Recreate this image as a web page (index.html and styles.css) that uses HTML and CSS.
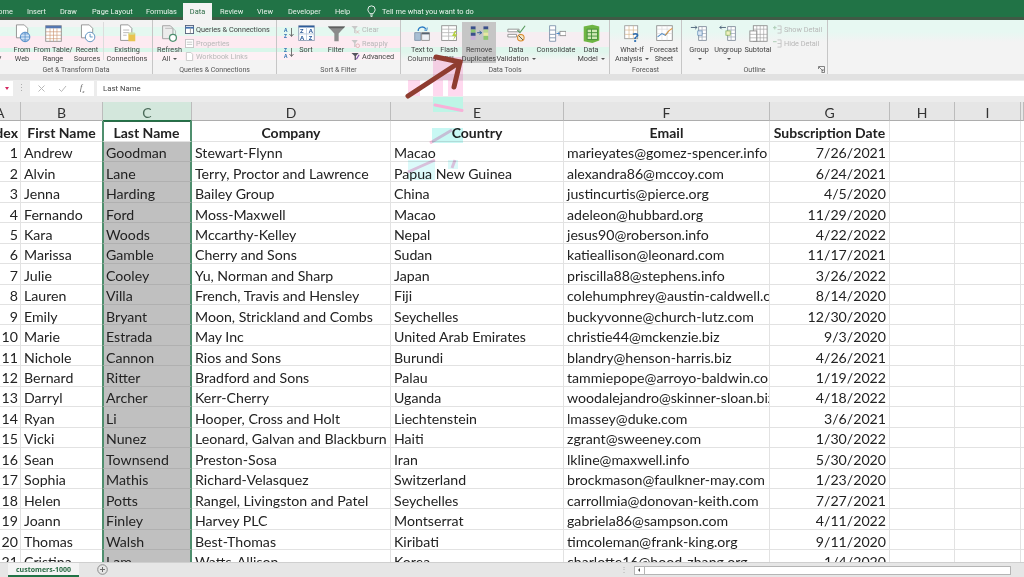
FILE: index.html
```html
<!DOCTYPE html>
<html lang="en">
<head>
<meta charset="utf-8">
<title>customers-1000 - Excel</title>
<link rel="stylesheet" href="styles.css">
</head>
<body>
<div class="app">
  <nav class="tabs">
    <span class="tab t-home">Home</span>
    <span class="tab t-insert">Insert</span>
    <span class="tab t-draw">Draw</span>
    <span class="tab t-layout">Page Layout</span>
    <span class="tab t-formulas">Formulas</span>
    <span class="tab tab-active">Data</span>
    <span class="tab t-review">Review</span>
    <span class="tab t-view">View</span>
    <span class="tab t-dev">Developer</span>
    <span class="tab t-help">Help</span>
    <svg class="bulb" viewBox="0 0 10 13"><path d="M3.2 9.5C2.5 7.8 1 7.2 1 4.8a4 4 0 0 1 8 0C9 7.2 7.5 7.8 6.8 9.5zM3.5 11h3M4 12.5h2" fill="none" stroke="#fff" stroke-width="1"/></svg>
    <span class="tell">Tell me what you want to do</span>
  </nav>

  <section class="ribbon">
    <div class="group g-get band-a">
      <div class="cmds">
        <div class="cmd w20 first"><svg class="ico" viewBox="0 0 22 22"><path d="M5 2h9l4 4v14H5z" fill="#fff" stroke="#8a8a8a"/><path d="M8 10h7M8 13h7M8 16h7" stroke="#2b7cc4"/></svg><span>From</span><span>Text/CSV</span></div>
        <div class="cmd w20"><svg class="ico" viewBox="0 0 22 22"><path d="M4 1h9l4 4v11H4z" fill="#fff" stroke="#8a8a8a"/><circle cx="14" cy="15" r="5.5" fill="#cfe2f5" stroke="#3f7fc1"/><path d="M8.5 15h11M14 9.5v11M10 11.5h8M10 18.500h8" stroke="#3f7fc1" stroke-width=".7"/></svg><span>From</span><span>Web</span></div>
        <div class="cmd w42"><svg class="ico" viewBox="0 0 22 22"><rect x="2" y="2" width="18" height="18" fill="#fff" stroke="#8a8a8a"/><path d="M2 2h18v3H2z" fill="#5577b0"/><path d="M2 9h18M2 13h18M2 17h18M7 5v15M11 5v15M15 5v15" stroke="#c98f6a" stroke-width=".7"/></svg><span>From Table/</span><span>Range</span></div>
        <div class="cmd w26"><svg class="ico" viewBox="0 0 22 22"><path d="M4 1h9l4 4v11H4z" fill="#fff" stroke="#8a8a8a"/><circle cx="14" cy="15" r="5.500" fill="#fff" stroke="#4d86b8"/><path d="M14 11.500V15h3" fill="none" stroke="#4d86b8"/></svg><span>Recent</span><span>Sources</span></div>
        <i class="minisep"></i>
        <div class="cmd w44"><svg class="ico" viewBox="0 0 22 22"><path d="M3 1h9l4 4v14H3z" fill="#fff" stroke="#8a8a8a"/><path d="M6 7h7M6 10h7M6 13h4" stroke="#b0b0b0"/><path d="M12 11h8v9h-8z" fill="#e8c34f"/><ellipse cx="16" cy="11" rx="4" ry="1.500" fill="#cfe0a0"/></svg><span>Existing</span><span>Connections</span></div>
      </div>
      <div class="glabel">Get &amp; Transform Data</div>
    </div>

    <div class="group g-queries band-a">
      <div class="cmds">
        <div class="cmd w33"><svg class="ico" viewBox="0 0 22 22"><path d="M3 2h9l3 3v12H3z" fill="#ececec" stroke="#9a9a9a"/><path d="M6 5h9l3 3v6" fill="none" stroke="#b5b5b5"/><circle cx="15" cy="16" r="4" fill="#fff" stroke="#4f8f70" stroke-width="1.500"/></svg><span>Refresh</span><span>All <b class="caret"></b></span></div>
        <div class="smalls">
          <div class="small"><svg class="sico" viewBox="0 0 10 10"><rect x=".5" y=".5" width="9" height="9" fill="#fff" stroke="#55627a"/><path d="M.5 3h9" stroke="#3f6fb0" stroke-width="2"/><path d="M6 3v6" stroke="#9a9a9a"/></svg>Queries &amp; Connections</div>
          <div class="small off"><svg class="sico" viewBox="0 0 10 10"><rect x=".5" y=".5" width="9" height="9" fill="#fff" stroke="#c4c4c4"/><path d="M2 3.500h6M2 6h6" stroke="#c4c4c4"/></svg>Properties</div>
          <div class="small off"><svg class="sico" viewBox="0 0 10 10"><path d="M1.500.5h5l2 2v7h-7z" fill="#fff" stroke="#c4c4c4"/></svg>Workbook Links</div>
        </div>
      </div>
      <div class="glabel">Queries &amp; Connections</div>
    </div>

    <div class="group g-sort band-a">
      <div class="cmds">
        <div class="sortpair">
          <svg class="sort-s" viewBox="0 0 10 11"><text x="0" y="5" class="svgt">A</text><text x="0" y="11" class="svgt">Z</text><path d="M7.500 1v8M5.500 7l2 2.500 2-2.500" fill="none" stroke="#555" stroke-width=".8"/></svg>
          <svg class="sort-s" viewBox="0 0 10 11"><text x="0" y="5" class="svgt">Z</text><text x="0" y="11" class="svgt">A</text><path d="M7.500 1v8M5.500 7l2 2.500 2-2.500" fill="none" stroke="#555" stroke-width=".8"/></svg>
        </div>
        <div class="cmd w22"><svg class="ico" viewBox="0 0 22 22"><rect x="2" y="2" width="18" height="17" fill="#fff" stroke="#8a9ab0"/><path d="M2 2h18v2H2z" fill="#2e5c9a"/><path d="M11 4v15M2 11.500h18" stroke="#b8c8dc"/><text x="3.500" y="10.500" class="svgt big">Z</text><text x="13.500" y="10.500" class="svgt big">A</text><text x="3.500" y="18" class="svgt big">A</text><text x="13.500" y="18" class="svgt big">Z</text></svg><span>Sort</span></div>
        <div class="cmd w30"><svg class="ico" viewBox="0 0 22 22"><path d="M1 3h20l-7.500 8v9h-5v-9z" fill="#8b8b8b"/><path d="M1 3h20l-2 2H3z" fill="#5f5f5f"/></svg><span>Filter</span></div>
        <div class="smalls">
          <div class="small off"><svg class="sico" viewBox="0 0 10 10"><path d="M.5 1h7L5 4.500V9H3.500V4.500z" fill="#c8c8c8"/><path d="M5.500 6l3.500 3.500M9 6 5.500 9.500" stroke="#d9a9a9" stroke-width=".8"/></svg>Clear</div>
          <div class="small off"><svg class="sico" viewBox="0 0 10 10"><path d="M.5 1h7L5 4.500V9H3.500V4.500z" fill="#c8c8c8"/><circle cx="7.500" cy="7.500" r="2" fill="none" stroke="#d9a9a9" stroke-width=".8"/></svg>Reapply</div>
          <div class="small"><svg class="sico" viewBox="0 0 10 10"><path d="M.5 1h8L5.500 4.500V9H4V4.500z" fill="#55555f"/><path d="M6 8l3-5" stroke="#7a4fa8" stroke-width="1.300"/></svg>Advanced</div>
        </div>
      </div>
      <div class="glabel">Sort &amp; Filter</div>
    </div>

    <div class="group g-tools">
      <div class="cmds">
        <div class="cmd w42"><svg class="ico" viewBox="0 0 22 22"><path d="M2 10h7v9H2z" fill="#a8bed4" stroke="#7f93a8"/><path d="M10 10h9v9h-9z" fill="#eef2f6" stroke="#8a8a8a"/><path d="M10 10h9v2h-9z" fill="#54636f"/><path d="M6 8c0-5 7-6 9-2" fill="none" stroke="#2b7cc4" stroke-width="1.500"/><path d="M13 7l3 .5 .5-3.500" fill="none" stroke="#2b7cc4"/></svg><span>Text to</span><span>Columns</span></div>
        <div class="cmd w22n"><svg class="ico" viewBox="0 0 22 22"><rect x="2" y="2" width="17" height="17" fill="#fff" stroke="#8a8a8a"/><path d="M2 6h17M2 10h17M2 14h17M10 2v17" stroke="#b9b9b9"/><path d="M17 8l-3 6h3l-2 5 5-7h-3l2-4z" fill="#b5cf3f"/></svg><span>Flash</span><span>Fill</span></div>
        <div class="cmd w36 active"><svg class="ico" viewBox="0 0 24 22"><path d="M1 2h6v4H1z" fill="#3a4f8a"/><path d="M1 6h6v4H1z" fill="#8fc76f"/><path d="M1 10h6v4H1z" fill="#3a4f8a"/><path d="M1 14h6v5H1z" fill="#c9b0d8"/><path d="M17 2h6v4h-6z" fill="#3a4f8a"/><path d="M17 6h6v4h-6z" fill="#b8d98f"/><path d="M17 10h6v4h-6z" fill="#e8e8a0"/><path d="M17 14h6v5h-6z" fill="#8fc76f"/><path d="M9 10h5M12 8l3 2-3 2" fill="none" stroke="#2b5c9a" stroke-width="1.200"/></svg><span>Remove</span><span>Duplicates</span></div>
        <div class="cmd w40"><svg class="ico" viewBox="0 0 22 22"><path d="M1 6h13v3H1zM1 12h10v3H1z" fill="#fff" stroke="#8a8a8a"/><path d="M12 7l3 3 6-8" fill="none" stroke="#5a9a5f" stroke-width="1.300"/><circle cx="16" cy="16" r="3.800" fill="#f3e7c8" stroke="#d8892b" stroke-width="1.200"/><path d="M13.500 13.500l5 5" stroke="#444"/></svg><span>Data</span><span>Validation <b class="caret"></b></span></div>
        <div class="cmd w40"><svg class="ico" viewBox="0 0 22 22"><path d="M3 2h7v18H3zM3 7h7M3 12h7M3 16h7" fill="#fff" stroke="#7b8fa8"/><path d="M11 11h4M13 9l2 2-2 2" fill="none" stroke="#2b7cc4"/><rect x="15" y="8.500" width="7" height="5" fill="#fff" stroke="#8a8a8a"/></svg><span>Consolidate</span></div>
        <div class="cmd w30"><svg class="ico" viewBox="0 0 22 22"><path d="M2 3l10-2 8 2v16l-8 3-10-2z" fill="#6fb544"/><path d="M6 6h12v12H6z" fill="#cfe8b4" stroke="#3d8a32"/><path d="M6 10h12M6 14h12M11 6v12" stroke="#3d8a32"/></svg><span>Data</span><span>Model <b class="caret"></b></span></div>
      </div>
      <div class="glabel">Data Tools</div>
    </div>

    <div class="group g-fore">
      <div class="cmds">
        <div class="cmd w38"><svg class="ico" viewBox="0 0 22 22"><rect x="2" y="2" width="15" height="15" fill="#fff" stroke="#9a9a9a"/><path d="M2 7h15M2 12h15M7 2v15M12 2v15" stroke="#d9b98f" stroke-width=".8"/><text x="11" y="21" class="svgq">?</text></svg><span>What-If</span><span>Analysis <b class="caret"></b></span></div>
        <div class="cmd w32"><svg class="ico" viewBox="0 0 22 22"><rect x="2" y="2" width="18" height="17" fill="#fff" stroke="#8a8a8a"/><path d="M2 6h18M2 11h18M8 2v17M14 2v17" stroke="#d5d5d5" stroke-width=".7"/><path d="M3 15l5-4 4 2 4-5" fill="none" stroke="#4f8ac4" stroke-width="1.200"/><path d="M12 13l4-5 4-3" fill="none" stroke="#e59a3a" stroke-width="1.200"/></svg><span>Forecast</span><span>Sheet</span></div>
      </div>
      <div class="glabel">Forecast</div>
    </div>

    <div class="group g-out">
      <div class="cmds">
        <div class="cmd w28"><svg class="ico" viewBox="0 0 22 22"><path d="M10 3h9v16h-9z" fill="#fff" stroke="#7f8b99"/><path d="M10 7h9M10 11h9M10 15h9M14 3v16" stroke="#9aa7b5" stroke-width=".8"/><rect x="9" y="8" width="5" height="5" fill="#dbe7f3" stroke="#4f7fb0" stroke-width=".7"/><path d="M1 4h7M6 2l2 2-2 2" fill="none" stroke="#42586f"/></svg><span>Group</span><span><b class="caret"></b></span></div>
        <div class="cmd w30"><svg class="ico" viewBox="0 0 22 22"><path d="M10 3h9v16h-9z" fill="#fff" stroke="#7f8b99"/><path d="M10 7h9M10 11h9M10 15h9M14 3v16" stroke="#9aa7b5" stroke-width=".8"/><rect x="8" y="8" width="5" height="5" fill="#f0f0c0" stroke="#7aaa4f" stroke-width=".8"/><path d="M8 4H1M3 2 1 4l2 2" fill="none" stroke="#42586f"/></svg><span>Ungroup</span><span><b class="caret"></b></span></div>
        <div class="cmd w30"><svg class="ico" viewBox="0 0 22 22"><rect x="5" y="2" width="16" height="18" fill="#fff" stroke="#8a8a8a"/><rect x="1" y="8" width="8" height="12" fill="#fff" stroke="#8a8a8a"/><path d="M5 6h16M1 12h20M1 16h20M9 2v18M13 2v18M17 2v18" stroke="#9a9a9a" stroke-width=".7"/></svg><span>Subtotal</span></div>
        <div class="smalls">
          <div class="small off"><svg class="sico" viewBox="0 0 10 10"><path d="M5 1h4M9 1v8M5 9h4M5 5h4" fill="none" stroke="#c4c4c4"/><path d="M0 3h4M2 1v4" stroke="#a8c8b0"/></svg>Show Detail</div>
          <div class="small off"><svg class="sico" viewBox="0 0 10 10"><path d="M5 1h4M9 1v8M5 9h4M5 5h4" fill="none" stroke="#c4c4c4"/><path d="M0 3h4" stroke="#a8c8b0"/></svg>Hide Detail</div>
        </div>
      </div>
      <div class="glabel">Outline</div>
      <svg class="launcher" viewBox="0 0 7 7"><path d="M.5 3V.5h6v6H3.500" fill="none" stroke="#666" stroke-width=".8"/><path d="M1 1l4 4M3 5h2V3" fill="none" stroke="#666" stroke-width=".8"/></svg>
    </div>
  </section>

  <div class="formula">
    <div class="namebox"><b class="pinkcaret"></b></div>
    <div class="dots">⋮</div>
    <div class="fbtns">
      <svg class="fb" viewBox="0 0 9 9"><path d="M1.500 1.500l6 6M7.500 1.500l-6 6" stroke="#b8b8b8"/></svg>
      <svg class="fb" viewBox="0 0 9 9"><path d="M1 5l2.500 2.500L8 2" fill="none" stroke="#b8b8b8"/></svg>
      <span class="fx">f<sub>x</sub></span>
    </div>
    <div class="finput">Last Name</div>
  </div>

  <div class="sheet">
    <div class="row colhead"><div class="ca"><span class="a-letter">A</span></div><div>B</div><div class="hsel">C</div><div>D</div><div>E</div><div>F</div><div>G</div><div>H</div><div>I</div><div></div></div>
    <div class="row titles"><div class="num">Index</div><div>First Name</div><div class="sel activecell">Last Name</div><div>Company</div><div>Country</div><div>Email</div><div>Subscription Date</div><div></div><div></div><div></div></div>
    <div class="row"><div class="num">1</div><div>Andrew</div><div class="sel">Goodman</div><div>Stewart-Flynn</div><div>Macao</div><div>marieyates@gomez-spencer.info</div><div class="num">7/26/2021</div><div></div><div></div><div></div></div>
    <div class="row"><div class="num">2</div><div>Alvin</div><div class="sel">Lane</div><div>Terry, Proctor and Lawrence</div><div>Papua New Guinea</div><div>alexandra86@mccoy.com</div><div class="num">6/24/2021</div><div></div><div></div><div></div></div>
    <div class="row"><div class="num">3</div><div>Jenna</div><div class="sel">Harding</div><div>Bailey Group</div><div>China</div><div>justincurtis@pierce.org</div><div class="num">4/5/2020</div><div></div><div></div><div></div></div>
    <div class="row"><div class="num">4</div><div>Fernando</div><div class="sel">Ford</div><div>Moss-Maxwell</div><div>Macao</div><div>adeleon@hubbard.org</div><div class="num">11/29/2020</div><div></div><div></div><div></div></div>
    <div class="row"><div class="num">5</div><div>Kara</div><div class="sel">Woods</div><div>Mccarthy-Kelley</div><div>Nepal</div><div>jesus90@roberson.info</div><div class="num">4/22/2022</div><div></div><div></div><div></div></div>
    <div class="row"><div class="num">6</div><div>Marissa</div><div class="sel">Gamble</div><div>Cherry and Sons</div><div>Sudan</div><div>katieallison@leonard.com</div><div class="num">11/17/2021</div><div></div><div></div><div></div></div>
    <div class="row"><div class="num">7</div><div>Julie</div><div class="sel">Cooley</div><div>Yu, Norman and Sharp</div><div>Japan</div><div>priscilla88@stephens.info</div><div class="num">3/26/2022</div><div></div><div></div><div></div></div>
    <div class="row"><div class="num">8</div><div>Lauren</div><div class="sel">Villa</div><div>French, Travis and Hensley</div><div>Fiji</div><div>colehumphrey@austin-caldwell.com</div><div class="num">8/14/2020</div><div></div><div></div><div></div></div>
    <div class="row"><div class="num">9</div><div>Emily</div><div class="sel">Bryant</div><div>Moon, Strickland and Combs</div><div>Seychelles</div><div>buckyvonne@church-lutz.com</div><div class="num">12/30/2020</div><div></div><div></div><div></div></div>
    <div class="row"><div class="num">10</div><div>Marie</div><div class="sel">Estrada</div><div>May Inc</div><div>United Arab Emirates</div><div>christie44@mckenzie.biz</div><div class="num">9/3/2020</div><div></div><div></div><div></div></div>
    <div class="row"><div class="num">11</div><div>Nichole</div><div class="sel">Cannon</div><div>Rios and Sons</div><div>Burundi</div><div>blandry@henson-harris.biz</div><div class="num">4/26/2021</div><div></div><div></div><div></div></div>
    <div class="row"><div class="num">12</div><div>Bernard</div><div class="sel">Ritter</div><div>Bradford and Sons</div><div>Palau</div><div>tammiepope@arroyo-baldwin.com</div><div class="num">1/19/2022</div><div></div><div></div><div></div></div>
    <div class="row"><div class="num">13</div><div>Darryl</div><div class="sel">Archer</div><div>Kerr-Cherry</div><div>Uganda</div><div>woodalejandro@skinner-sloan.biz</div><div class="num">4/18/2022</div><div></div><div></div><div></div></div>
    <div class="row"><div class="num">14</div><div>Ryan</div><div class="sel">Li</div><div>Hooper, Cross and Holt</div><div>Liechtenstein</div><div>lmassey@duke.com</div><div class="num">3/6/2021</div><div></div><div></div><div></div></div>
    <div class="row"><div class="num">15</div><div>Vicki</div><div class="sel">Nunez</div><div>Leonard, Galvan and Blackburn</div><div>Haiti</div><div>zgrant@sweeney.com</div><div class="num">1/30/2022</div><div></div><div></div><div></div></div>
    <div class="row"><div class="num">16</div><div>Sean</div><div class="sel">Townsend</div><div>Preston-Sosa</div><div>Iran</div><div>lkline@maxwell.info</div><div class="num">5/30/2020</div><div></div><div></div><div></div></div>
    <div class="row"><div class="num">17</div><div>Sophia</div><div class="sel">Mathis</div><div>Richard-Velasquez</div><div>Switzerland</div><div>brockmason@faulkner-may.com</div><div class="num">1/23/2020</div><div></div><div></div><div></div></div>
    <div class="row"><div class="num">18</div><div>Helen</div><div class="sel">Potts</div><div>Rangel, Livingston and Patel</div><div>Seychelles</div><div>carrollmia@donovan-keith.com</div><div class="num">7/27/2021</div><div></div><div></div><div></div></div>
    <div class="row"><div class="num">19</div><div>Joann</div><div class="sel">Finley</div><div>Harvey PLC</div><div>Montserrat</div><div>gabriela86@sampson.com</div><div class="num">4/11/2022</div><div></div><div></div><div></div></div>
    <div class="row"><div class="num">20</div><div>Thomas</div><div class="sel">Walsh</div><div>Best-Thomas</div><div>Kiribati</div><div>timcoleman@frank-king.org</div><div class="num">9/11/2020</div><div></div><div></div><div></div></div>
    <div class="row"><div class="num">21</div><div>Cristina</div><div class="sel">Lam</div><div>Watts-Allison</div><div>Korea</div><div>charlotte16@hood-zhang.org</div><div class="num">1/4/2020</div><div></div><div></div><div></div></div>
  </div>

  <footer class="bottom">
    <div class="sheettab">customers-1000</div>
    <svg class="addsheet" viewBox="0 0 11 11"><circle cx="5.500" cy="5.500" r="4.800" fill="none" stroke="#8a8a8a"/><path d="M5.500 3v5M3 5.500h5" stroke="#6a6a6a"/></svg>
    <div class="vdots">⋮</div>
    <div class="hscroll"><div class="harrow"></div></div>
  </footer>

  <svg class="overlay" viewBox="0 0 1024 577">
    <path class="mul" d="M433 57h30v23h-30z" fill="#ffd9ef"/>
    <path class="mul" d="M408 80h12v16h-12zM433 80h10v16h-10zM448 80h15v16h-15z" fill="#ffd9ef"/>
    <path d="M433 97h30v15h-30z" fill="#bdf5e6"/>
    <path d="M435 105l27 5.500" stroke="#f9b0d8" stroke-width="3" stroke-linecap="round"/>
    <path class="mul" d="M432 128h31v15h-31z" fill="#c8f8f4"/>
    <path class="mul" d="M430 143l22-13" stroke="#fbc4e0" stroke-width="3"/>
    <path class="mul" d="M408 160h27v20h-27z" fill="#dcfafa"/>
    <path class="mul" d="M408 172l27-12" stroke="#fbc4e0" stroke-width="3"/>
    <path class="mul" d="M448 160h10v9h-10z" fill="#dcfafa"/>
    <path class="mul" d="M452 168l3-8" stroke="#fbc4e0" stroke-width="3"/>
    <path d="M408 96l52-34M436 57l24 5-6 25" fill="none" stroke="#8f3d30" stroke-width="5" stroke-linecap="round"/>
  </svg>
</div>
</body>
</html>
```
FILE: styles.css
```css
* { box-sizing: border-box; }
html, body { margin: 0; padding: 0; }
body { width: 1024px; height: 577px; overflow: hidden; background: #fff; }
.app { position: relative; width: 1024px; height: 577px; overflow: hidden; display: flex; flex-direction: column; font-family: Roboto, "Open Sans", sans-serif; color: #333; }

/* tabs */
.tabs { flex: 0 0 20px; height: 20px; background: linear-gradient(#217346 0 17px, #3f5a45 17px); display: flex; align-items: flex-end; font-size: 7.400px; color: #e9f3ec; overflow: hidden; white-space: nowrap; }
.tab { height: 17px; line-height: 17px; padding-top: 0; }
.t-home { margin-left: -7px; width: 34px; }
.t-insert { width: 33px; }
.t-draw { width: 32px; }
.t-layout { width: 54px; }
.t-formulas { width: 37px; }
.tab-active { width: 29px; height: 17px; background: #f3f3f3; color: #2a6a44; text-align: center; }
.t-review { width: 37px; margin-left: 8px; }
.t-view { width: 31px; }
.t-dev { width: 47px; }
.t-help { width: 32px; }
.bulb { width: 9px; height: 12px; margin-bottom: 3px; }
.tell { margin-left: 6px; height: 17px; line-height: 17px; }

/* ribbon */
.ribbon { flex: 0 0 54px; height: 54px; display: flex; overflow: hidden; background: linear-gradient(#e7f8f2 0 12px, #f3f3f3 22px); font-size: 7.300px; color: #444; white-space: nowrap; }
.band-a { background: linear-gradient(#f3f3f3 0 7px, #e4f8f0 7px 16px, #fdeaf1 16px 28px, #d9f6ea 28px 32px, #fdf1f5 32px 40px, #f3f3f3 40px); }
.group { position: relative; flex: 0 0 auto; height: 54px; display: flex; flex-direction: column; border-right: 1px solid #c6c6c6; }
.g-get { width: 153px; margin-left: 0; }
.g-queries { width: 124px; }
.g-sort { width: 124px; }
.g-tools { width: 209px; background: linear-gradient(#e7f8f2 0 12px, #f6eef2 12px 27px, #dff6ec 27px 32px, #f3f3f3 40px); }
.g-fore { width: 72px; }
.g-out { width: 146px; }
.cmds { height: 46px; display: flex; align-items: flex-start; padding-top: 2px; }
.g-get .cmds { margin-left: -8px; }
.cmd { height: 41px; display: flex; flex-direction: column; align-items: center; line-height: 9.400px; flex: 0 0 auto; }
.ico { width: 19px; height: 19px; margin: 2px 0 1.500px; flex: 0 0 auto; }
.first { margin-left: -16px; margin-right: 16px; }
.w20 { width: 20px; }
.w22 { width: 20px; }
.w22n { width: 22px; margin-left: -3px; }
.w26 { width: 26px; }
.w28 { width: 28px; margin-left: 3px; }
.w30 { width: 30px; }
.w32 { width: 32px; margin-left: -3px; }
.w33 { width: 33px; }
.w36 { width: 34px; margin-left: 2px; }
.w38 { width: 38px; margin-left: 3px; }
.w40 { width: 40px; }
.w42 { width: 42px; }
.w44 { width: 44px; }
.active { background: #c6c6c6; }
.g-tools .w42 { width: 38px; margin-left: 2px; }
.g-sort .w30 { margin-left: 5px; }
.minisep { flex: 0 0 1px; width: 1px; height: 38px; background: #dcdcdc; margin: 0 1px 0 3px; }
.caret { display: inline-block; width: 0; height: 0; border: 2px solid transparent; border-top: 2.500px solid #555; border-bottom: 0; vertical-align: middle; margin-left: 1px; }
.glabel { height: 8px; line-height: 9px; text-align: center; font-size: 7px; color: #555; }
.smalls { display: flex; flex-direction: column; padding-top: 1px; }
.g-queries .smalls { margin-left: -1px; }
.small { height: 13.500px; line-height: 13.500px; display: flex; align-items: center; gap: 2px; }
.small.off { color: #b8b8b8; }
.sico { width: 9px; height: 9px; flex: 0 0 auto; }
.sortpair { display: flex; flex-direction: column; gap: 9px; padding: 5px 0 0 7px; width: 19px; }
.sort-s { width: 10px; height: 11px; }
.svgt { font: 700 5px "Open Sans", sans-serif; fill: #2d6db0; }
.svgt.big { font-size: 7px; fill: #2e5c9a; }
.svgq { font: 700 15px "Open Sans", sans-serif; fill: #2b6cb0; }
.launcher { position: absolute; right: 2px; bottom: 1px; width: 7px; height: 7px; }

/* formula */
.formula { flex: 0 0 28px; height: 28px; background: linear-gradient(#e1e1e1 0 6px, #ececec 6px); padding: 7px 0 6px 0; display: flex; }
.namebox { width: 13px; background: #fff; position: relative; display: flex; align-items: center; justify-content: center; }
.pinkcaret { width: 0; height: 0; border: 2.500px solid transparent; border-top: 3px solid #d4265f; border-bottom: 0; }
.dots { width: 17px; text-align: center; font-size: 9px; line-height: 15px; color: #aaa; }
.fbtns { width: 64px; background: #fff; display: flex; align-items: center; padding-left: 7px; gap: 12px; }
.fb { width: 9px; height: 9px; }
.fx { font: italic 8px "Liberation Serif", serif; color: #555; margin-left: 1px; }
.fx sub { font-size: 5px; }
.finput { flex: 1; margin-left: 3px; background: #fff; font-size: 7.800px; line-height: 15px; padding-left: 6px; color: #444; }

/* sheet */
.sheet { flex: 1 1 auto; min-height: 0; overflow: hidden; font-family: Lato, "Open Sans", sans-serif; font-size: 14.150px; color: #222; background: #fff; }
.row { display: grid; grid-template-columns: 21px 82px 89px 199px 173px 206px 120px 65px 66px 3px; height: 20.440px; }
.row > div { border-right: 1px solid #e2e2e2; border-bottom: 1px solid #e2e2e2; padding: 3px 3px 0; line-height: 17px; white-space: nowrap; overflow: hidden; display: flex; align-items: center; min-width: 0; }
.num { justify-content: flex-end; }
.row > .num { padding-right: 2px; }
.row > .num:nth-child(7) { padding-right: 3px; }
.colhead { height: 19px; background: #e6e6e6; }
.row.colhead > div { justify-content: center; border-right: 1px solid #bcbcbc; border-bottom: 1px solid #adadad; padding: 3px 0 0; color: #333; font-size: 14px; }
.row.colhead > .ca { justify-content: flex-start; }
.a-letter { margin-left: -5px; }
.row.colhead > .hsel { background: #d3e7dc; color: #4a6a58; border-bottom: 1px solid #217346; }
.titles { font-weight: 700; font-size: 14px; height: 20.500px; }
.titles > div { justify-content: center; }
.row.titles > .num { justify-content: flex-end; }
.row > .sel { background: #c0c0c0; border-left: 2px solid #4f8f6e; border-right: 2px solid #4f8f6e; border-bottom: 1px solid #b0b0b0; padding-left: 2px; margin-left: -1px; }
.row > .sel.activecell { background: #fff; box-shadow: inset 0 1px 0 #2d6a4a; border-bottom-color: #e2e2e2; }

/* bottom */
.bottom { flex: 0 0 15px; height: 15px; background: #e6e6e6; display: flex; align-items: stretch; position: relative; border-top: 1px solid #cfcfcf; }
.sheettab { margin-left: 8px; width: 71px; background: #f4f4f4; border-bottom: 2px solid #217346; font: 700 7px/13px "Open Sans", sans-serif; text-align: center; color: #2a6a44; }
.addsheet { width: 11px; height: 11px; margin: 1px 0 0 18px; }
.vdots { margin-left: 512px; width: 14px; font-size: 8px; line-height: 13px; color: #aaa; }
.hscroll { margin: 3px 13px 2px 0; flex: 1; background: #fff; border: 1px solid #b5b5b5; }
.harrow { width: 10px; height: 100%; border-right: 1px solid #b5b5b5; position: relative; }
.harrow::after { content: ""; position: absolute; left: 3px; top: 1px; border: 2px solid transparent; border-right: 2.500px solid #444; border-left: 0; }

.overlay { position: absolute; left: 0; top: 0; width: 1024px; height: 577px; pointer-events: none; }
.mul { mix-blend-mode: multiply; }
```
